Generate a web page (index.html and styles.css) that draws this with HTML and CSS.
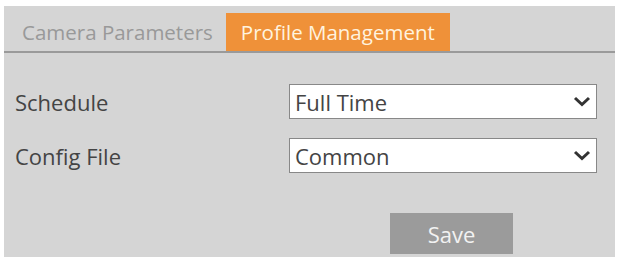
FILE: index.html
```html
<!DOCTYPE html>
<html lang="en">
<head>
    <meta charset="UTF-8">
    <title>Profile Management</title>
    <link rel="stylesheet" href="styles.css">
</head>
<body>

    <div class="panel">
        <!-- Tabs -->
        <div class="tabs">
            <div class="tab">Camera Parameters</div>
            <div class="tab active">Profile Management</div>
        </div>

        <!-- Form -->
        <div class="form">
            <div class="row">
                <label class="label">Schedule</label>
                <div class="select">
                    <span>Full Time</span>
                    <svg width="18" height="11" viewBox="0 0 18 11"><path d="M2 2 L9 8.5 L16 2" fill="none" stroke="#333" stroke-width="3"/></svg>
                </div>
            </div>
            <div class="row">
                <label class="label">Config File</label>
                <div class="select">
                    <span>Common</span>
                    <svg width="18" height="11" viewBox="0 0 18 11"><path d="M2 2 L9 8.5 L16 2" fill="none" stroke="#333" stroke-width="3"/></svg>
                </div>
            </div>
        </div>

        <div class="actions">
            <button class="save">Save</button>
        </div>
    </div>

</body>
</html>
```

FILE: styles.css
```css
body {
    margin: 0;
    background: #fff;
    font-family: "Open Sans", "Noto Sans", sans-serif;
}
.panel {
    margin: 6px 0 0 4px;
    width: 611px;
    height: 251px;
    background: #d5d5d5;
    display: flex;
    flex-direction: column;
}
.tabs {
    height: 45px;
    display: flex;
    align-items: flex-end;
    border-bottom: 2px solid #9a9a9a;
    padding-left: 4px;
}
.tab {
    height: 38px;
    line-height: 38px;
    padding: 0 13px 0 14px;
    font-size: 20.5px;
    color: #999;
}
.tab.active {
    background: #ef9139;
    color: #fff3df;
    padding: 0 15px;
}
.form {
    padding: 31px 18px 0 11px;
    display: flex;
    flex-direction: column;
    gap: 19px;
}
.row {
    display: flex;
    align-items: center;
    justify-content: space-between;
}
.label {
    font-size: 22px;
    color: #444;
}
.select {
    height: 33px;
    width: 296px;
    background: #fff;
    border: 1px solid #888;
    display: flex;
    align-items: center;
    justify-content: space-between;
    padding: 0 5px 0 5px;
    font-size: 22px;
    color: #444;
}
.actions {
    margin-top: 40px;
    padding-left: 386px;
}
.save {
    width: 123px;
    height: 41px;
    background: #9b9b9b;
    color: #f2f2f2;
    border: none;
    font-family: "Open Sans", "Noto Sans", sans-serif;
    font-size: 22px;
}
```
